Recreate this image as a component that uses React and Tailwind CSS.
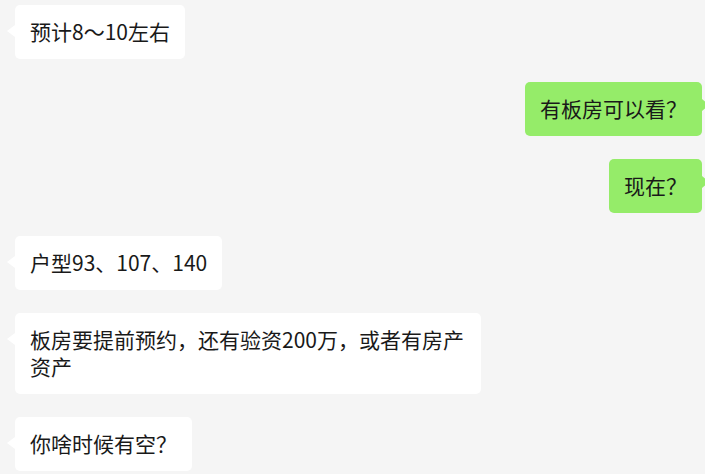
const messages = [
  { from: 'them', text: '预计8～10左右' },
  { from: 'me', text: '有板房可以看？' },
  { from: 'me', text: '现在？' },
  { from: 'them', text: '户型93、107、140' },
  { from: 'them', text: '板房要提前预约，还有验资200万，或者有房产资产' },
  { from: 'them', text: '你啥时候有空？' },
];

const Bubble = ({ from, text }) => {
  const mine = from === 'me';
  return (
    <div className={`flex ${mine ? 'justify-end pr-[3px]' : 'justify-start pl-[15px]'}`}>
      <div
        className={`relative max-w-[466px] rounded-[5px] px-[15px] pt-[13px] pb-[14px] text-[21px] leading-[27px] text-[#191919] ${
          mine ? 'bg-[#95ec69]' : 'bg-white'
        }`}
      >
        {/* 气泡尖角 */}
        {mine ? (
          <span className="absolute -right-[7px] top-[17px] h-0 w-0 border-y-[6px] border-l-[7px] border-y-transparent border-l-[#95ec69]" />
        ) : (
          <span className="absolute -left-[8px] top-[20px] h-0 w-0 border-y-[6px] border-r-[8px] border-y-transparent border-r-white" />
        )}
        {text}
      </div>
    </div>
  );
};

export default function App() {
  return (
    <div
      className="h-[474px] w-[705px] overflow-hidden bg-[#f5f5f5] pt-[5px]"
      style={{ fontFamily: '"Noto Sans CJK SC", "Noto Sans", sans-serif' }}
    >
      <div className="flex flex-col gap-[23px]">
        {messages.map((m, i) => (
          <Bubble key={i} from={m.from} text={m.text} />
        ))}
      </div>
    </div>
  );
}
